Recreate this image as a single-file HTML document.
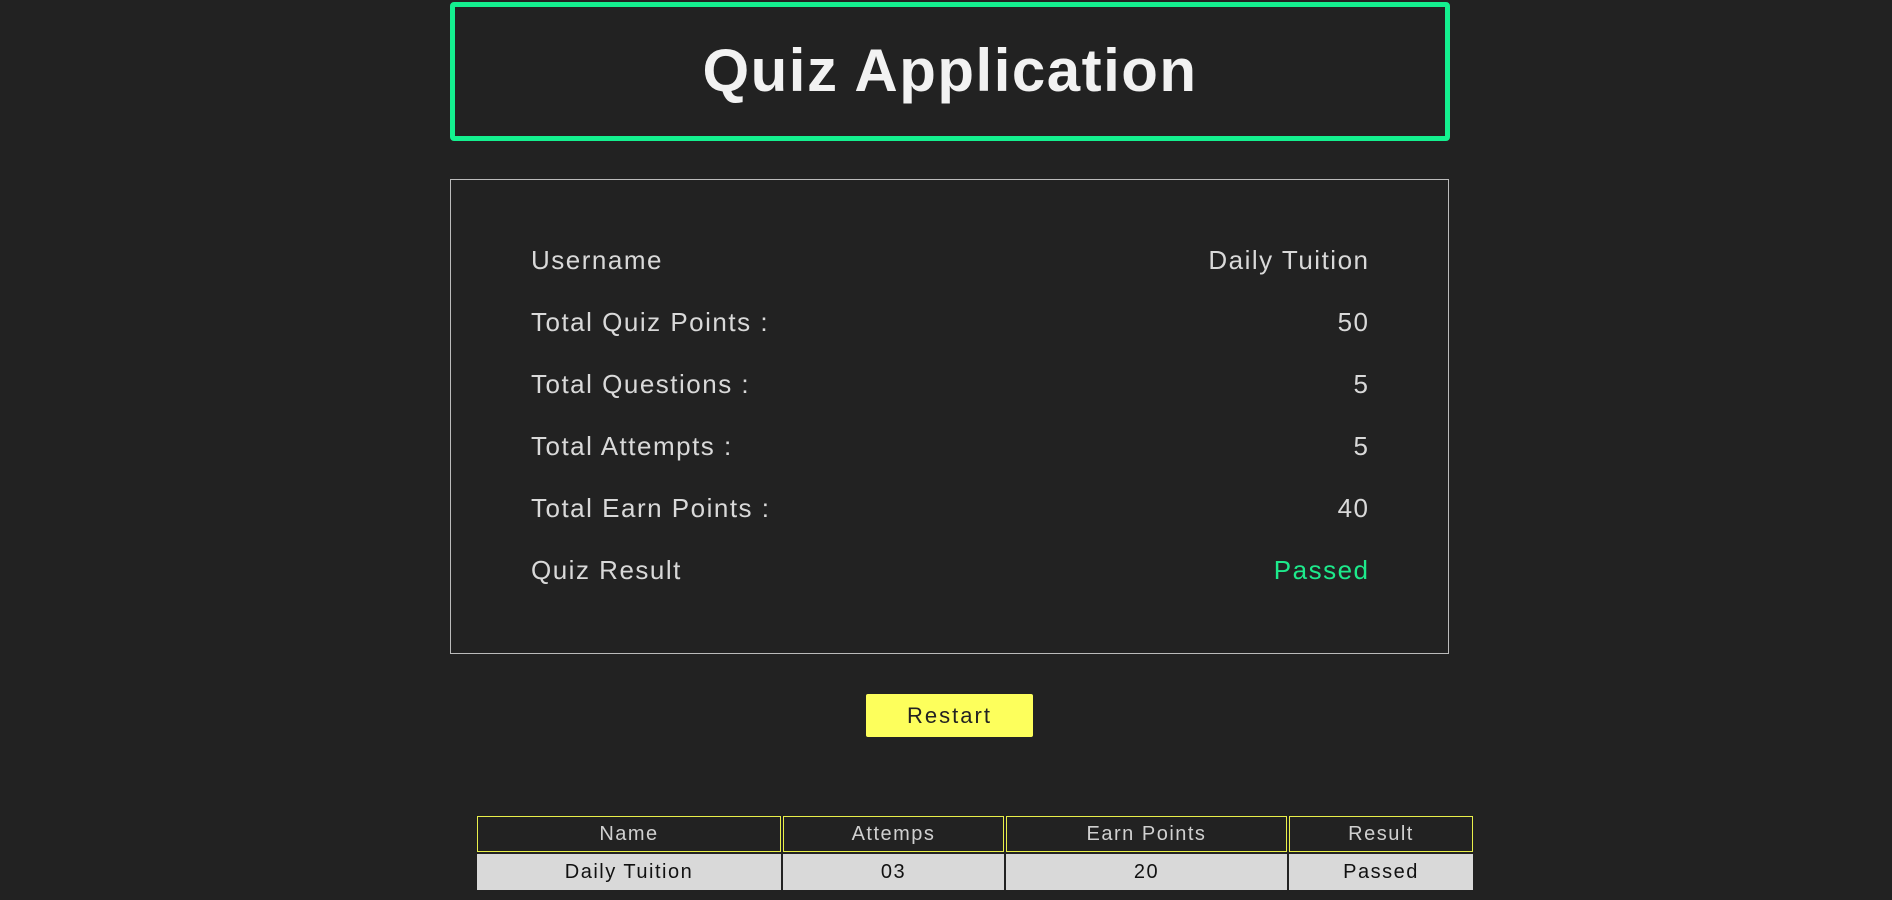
<!DOCTYPE html>
<html><head><style>
body{margin:0;background:#222;width:1892px;height:900px;overflow:hidden;font-family:"Liberation Sans",sans-serif;position:relative}
.hdr{position:absolute;left:450px;top:2px;width:990px;height:129px;border:5px solid #14f08f;border-radius:4px;color:#f2f2f2;font-size:60px;font-weight:bold;text-align:center;line-height:128px;letter-spacing:1.5px}
.panel{position:absolute;left:450px;top:179px;width:997px;height:473px;border:1px solid #bbb}
.row{position:absolute;left:80px;right:80px;height:40px;line-height:40px;font-size:26px;color:#d9d9d9;display:flex;justify-content:space-between;letter-spacing:1.5px}
.row span:last-child{margin-right:-1.5px}
.btn{position:absolute;left:866px;top:694px;width:167px;height:43px;background:#fdff5c;border-radius:2px;color:#222;font-size:22px;text-align:center;line-height:43px;letter-spacing:2px}
.c{position:absolute;text-align:center;font-size:20px;box-sizing:border-box;letter-spacing:1.5px}
.h{border:1px solid #e9ef4a;color:#d0d0d0;top:816px;height:36px;line-height:34px}
.d{background:#d9d9d9;color:#111;top:854px;height:36px;line-height:36px}
</style></head><body>
<div class="hdr">Quiz Application</div>
<div class="panel">
<div class="row" style="top:60px"><span>Username</span><span>Daily Tuition</span></div>
<div class="row" style="top:122px"><span>Total Quiz Points :</span><span>50</span></div>
<div class="row" style="top:184px"><span>Total Questions :</span><span>5</span></div>
<div class="row" style="top:246px"><span>Total Attempts :</span><span>5</span></div>
<div class="row" style="top:308px"><span>Total Earn Points :</span><span>40</span></div>
<div class="row" style="top:370px"><span>Quiz Result</span><span style="color:#1de98b">Passed</span></div>
</div>
<div class="btn">Restart</div>
<div class="c h" style="left:477px;width:304px">Name</div>
<div class="c h" style="left:783px;width:221px">Attemps</div>
<div class="c h" style="left:1006px;width:281px">Earn Points</div>
<div class="c h" style="left:1289px;width:184px">Result</div>
<div class="c d" style="left:477px;width:304px">Daily Tuition</div>
<div class="c d" style="left:783px;width:221px">03</div>
<div class="c d" style="left:1006px;width:281px">20</div>
<div class="c d" style="left:1289px;width:184px">Passed</div>
</body></html>
